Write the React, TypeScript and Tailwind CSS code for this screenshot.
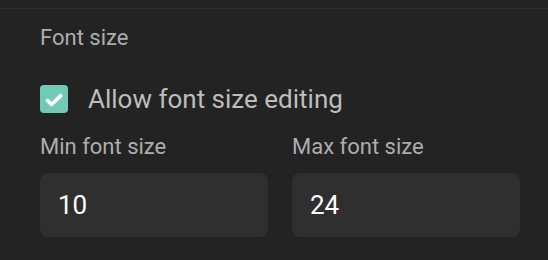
export default function App() {
  return (
    <div
      className="w-[548px] h-[260px] bg-[#232323] overflow-hidden"
      style={{ fontFamily: 'Roboto, "Noto Sans", sans-serif' }}
    >
      <div className="h-[8px]" />
      <div className="border-t border-[#2e2e2e]" />
      <div className="pl-10 pr-7">
        <div className="mt-4 text-[22px] leading-[26px] text-[#adadad]">Font size</div>
        <div className="mt-[34px] flex items-center h-[28px]">
          <div className="w-[28px] h-[28px] rounded-[4px] bg-[#72c9b6] flex items-center justify-center">
            <svg width="28" height="28" viewBox="0 0 28 28" fill="none">
              <path
                d="M7.5 15.5L11.5 19.5L20.5 10.8"
                stroke="#ffffff"
                strokeWidth="3.8"
                strokeLinecap="round"
                strokeLinejoin="round"
              />
            </svg>
          </div>
          <span className="ml-5 text-[26px] leading-[28px] text-[#bdbdbd]">Allow font size editing</span>
        </div>
        <div className="mt-[21px] grid grid-cols-2 gap-6">
          <div className="flex flex-col">
            <label className="text-[22px] leading-[26px] text-[#adadad]">Min font size</label>
            <div className="mt-[13px] h-16 rounded-lg bg-[#2f2f2f] flex items-center px-[18px] text-[26px] text-white">
              10
            </div>
          </div>
          <div className="flex flex-col">
            <label className="text-[22px] leading-[26px] text-[#adadad]">Max font size</label>
            <div className="mt-[13px] h-16 rounded-lg bg-[#2f2f2f] flex items-center px-[18px] text-[26px] text-white">
              24
            </div>
          </div>
        </div>
      </div>
    </div>
  );
}
